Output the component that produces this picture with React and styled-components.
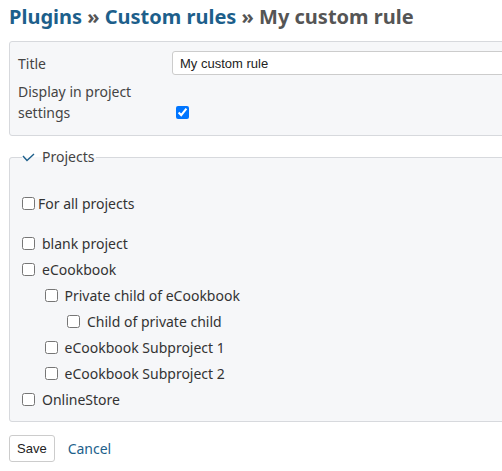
import React from "react";
import styled, { createGlobalStyle } from "styled-components";

const Global = createGlobalStyle`
  html, body { margin: 0; padding: 0; overflow: hidden; background: #fff; }
  body {
    font-family: "Noto Sans", "DejaVu Sans", sans-serif;
    font-size: 14px;
    color: #333;
  }
`;

const Page = styled.div`
  width: 620px;
  padding: 0 9px;
  box-sizing: border-box;
`;

const Heading = styled.h2`
  margin: 0;
  padding-top: 3px;
  font-size: 20px;
  line-height: 28px;
  font-weight: 700;
  color: #555;
  height: 30px;
`;

const Crumb = styled.a`
  color: #1d5f8b;
  text-decoration: none;
`;

const Box = styled.div`
  margin-top: 8px;
  border: 1px solid #d7d9dd;
  border-radius: 3px;
  background: #f6f7f9;
  padding: 9px 8px 12px;
`;

const Row = styled.div`
  display: grid;
  grid-template-columns: 154px 1fr;
  align-items: ${(p) => p.$align || "center"};
  margin-bottom: ${(p) => p.$gap || 0}px;
`;

const Label = styled.label`
  line-height: 21px;
  color: #444;
`;

const TextInput = styled.input`
  box-sizing: border-box;
  height: 24px;
  width: 100%;
  border: 1px solid #ccc;
  border-radius: 3px;
  background: #fff;
  font-family: "Liberation Sans", Arial, sans-serif;
  font-size: 13px;
  color: #222;
  padding: 2px 7px;
`;

const Check = styled.input`
  width: 13px;
  height: 13px;
  margin: ${(p) => p.$margin || "0"};
  flex: none;
`;

const Fieldset = styled.fieldset`
  margin: 11px 0 0;
  border: 1px solid #d7d9dd;
  border-radius: 3px;
  background: #f6f7f9;
  padding: 23px 12px 9px;
`;

const Legend = styled.legend`
  padding: 0 2px 0 0;
  margin-left: 0;
  color: #444;
  display: flex;
  align-items: center;
  gap: 7px;
  line-height: 20px;
`;

const List = styled.div`
  display: flex;
  flex-direction: column;
`;

const Item = styled.label`
  display: flex;
  align-items: center;
  gap: ${(p) => p.$gap ?? 7}px;
  height: 26px;
  padding-left: ${(p) => p.$level * 22.5}px;
  color: #333;
  margin-bottom: ${(p) => p.$after || 0}px;
`;

const Actions = styled.div`
  display: flex;
  align-items: center;
  gap: 13px;
  margin-top: 13px;
`;

const Button = styled.button`
  box-sizing: border-box;
  height: 27px;
  padding: 0 7px;
  border: 1px solid #ccc;
  border-radius: 3px;
  background: #fff;
  font-family: "Liberation Sans", Arial, sans-serif;
  font-size: 13px;
  color: #222;
`;

const LinkText = styled.a`
  color: #1d5f8b;
  text-decoration: none;
`;

const Toggle = () => (
  <svg width="13" height="9" viewBox="0 0 13 9" fill="none">
    <path d="M1 3 L5 7.5 L12 1" stroke="#1d5f8b" strokeWidth="1.4" />
  </svg>
);

const projects = [
  { name: "blank project", level: 0 },
  { name: "eCookbook", level: 0 },
  { name: "Private child of eCookbook", level: 1 },
  { name: "Child of private child", level: 2 },
  { name: "eCookbook Subproject 1", level: 1 },
  { name: "eCookbook Subproject 2", level: 1 },
  { name: "OnlineStore", level: 0 },
];

export default function App() {
  return (
    <>
      <Global />
      <Page>
        <Heading>
          <Crumb href="#">Plugins</Crumb> » <Crumb href="#">Custom rules</Crumb> » My custom rule
        </Heading>
        <Box>
          <Row $gap={6}>
            <Label>Title</Label>
            <TextInput defaultValue="My custom rule" />
          </Row>
          <Row $align="end">
            <Label>Display in project settings</Label>
            <Check type="checkbox" defaultChecked $margin="0 0 4px 4px" />
          </Row>
        </Box>
        <Fieldset>
          <Legend>
            <Toggle />
            Projects
          </Legend>
          <List>
            <Item $level={0} $after={14} $gap={3}>
              <Check type="checkbox" />
              For all projects
            </Item>
            {projects.map((p) => (
              <Item key={p.name} $level={p.level}>
                <Check type="checkbox" />
                {p.name}
              </Item>
            ))}
          </List>
        </Fieldset>
        <Actions>
          <Button>Save</Button>
          <LinkText href="#">Cancel</LinkText>
        </Actions>
      </Page>
    </>
  );
}
